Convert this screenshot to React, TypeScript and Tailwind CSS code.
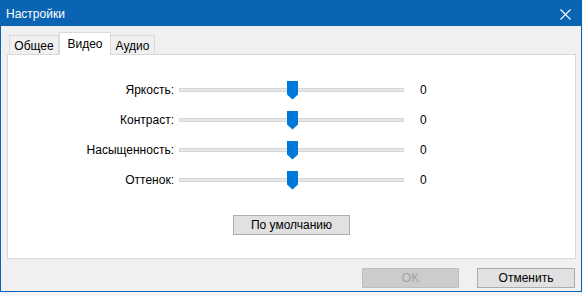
import React from 'react';

const font = { fontFamily: '"Liberation Sans", "Noto Sans", Arial, sans-serif' };

const rows = ['Яркость:', 'Контраст:', 'Насыщенность:', 'Оттенок:'];

function Slider() {
  return (
    <div className="relative flex h-[30px] w-[225px] items-center">
      <div className="h-[4px] w-full border border-[#d6d6d6] bg-[#e7e7e7]" />
      <svg className="absolute left-[108px] top-[6px]" width="11" height="19" viewBox="0 0 11 19">
        <path d="M0 0 H11 V13.5 L5.5 18.5 L0 13.5 Z" fill="#0078d7" />
      </svg>
    </div>
  );
}

export default function App() {
  return (
    <div className="h-[296px] w-[583px] bg-[#f6f6f6] text-[12px] text-black" style={font}>
      <div className="flex h-[292px] w-[582px] flex-col border border-[#0b63b3] bg-[#f0f0f0]">
        {/* title bar */}
        <div className="flex h-[25px] items-center justify-between bg-[#0b63b3] pl-[5px] pr-[10px] text-white">
          <span className="text-[12px]">Настройки</span>
          <svg width="11" height="11" viewBox="0 0 11 11" className="mt-[1px]">
            <path d="M0.5 0.5 L10.5 10.5 M10.5 0.5 L0.5 10.5" stroke="#ffffff" strokeWidth="1.1" />
          </svg>
        </div>

        <div className="flex flex-1 flex-col px-[6px] pt-[6px]">
          {/* tabs */}
          <div className="flex h-[22px] items-end pl-[2px]">
            <div className="flex h-[19px] w-[50px] items-center justify-center border border-b-0 border-[#d9d9d9] bg-[#f0f0f0] pt-[1px]">
              Общее
            </div>
            <div className="relative z-10 -mb-px flex h-[23px] w-[52px] items-start justify-center border border-b-0 border-[#d9d9d9] bg-white pt-[2px]">
              Видео
            </div>
            <div className="flex h-[19px] w-[44px] items-center justify-center border border-b-0 border-l-0 border-[#d9d9d9] bg-[#f0f0f0] pt-[1px]">
              Аудио
            </div>
          </div>

          {/* panel */}
          <div className="flex h-[205px] w-[569px] flex-col items-center border border-[#d9d9d9] bg-white pt-[20px]">
            <div className="flex w-full flex-col">
              {rows.map((r) => (
                <div key={r} className="flex h-[30px] items-center">
                  <div className="w-[167px] pr-[1px] text-right">{r}</div>
                  <div className="ml-[4px]">
                    <Slider />
                  </div>
                  <div className="ml-[16px]">0</div>
                </div>
              ))}
            </div>
            <button className="mt-[20px] flex h-[20px] w-[117px] items-center justify-center border border-[#adadad] bg-[#e1e1e1]">
              По умолчанию
            </button>
          </div>

          {/* footer buttons */}
          <div className="mt-[9px] flex justify-end gap-[18px]">
            <button
              disabled
              className="flex h-[20px] w-[97px] items-center justify-center border border-[#bfbfbf] bg-[#cccccc] text-[#a3a3a3]"
            >
              OK
            </button>
            <button className="flex h-[20px] w-[98px] items-center justify-center border border-[#adadad] bg-[#e1e1e1]">
              Отменить
            </button>
          </div>
        </div>
      </div>
    </div>
  );
}
